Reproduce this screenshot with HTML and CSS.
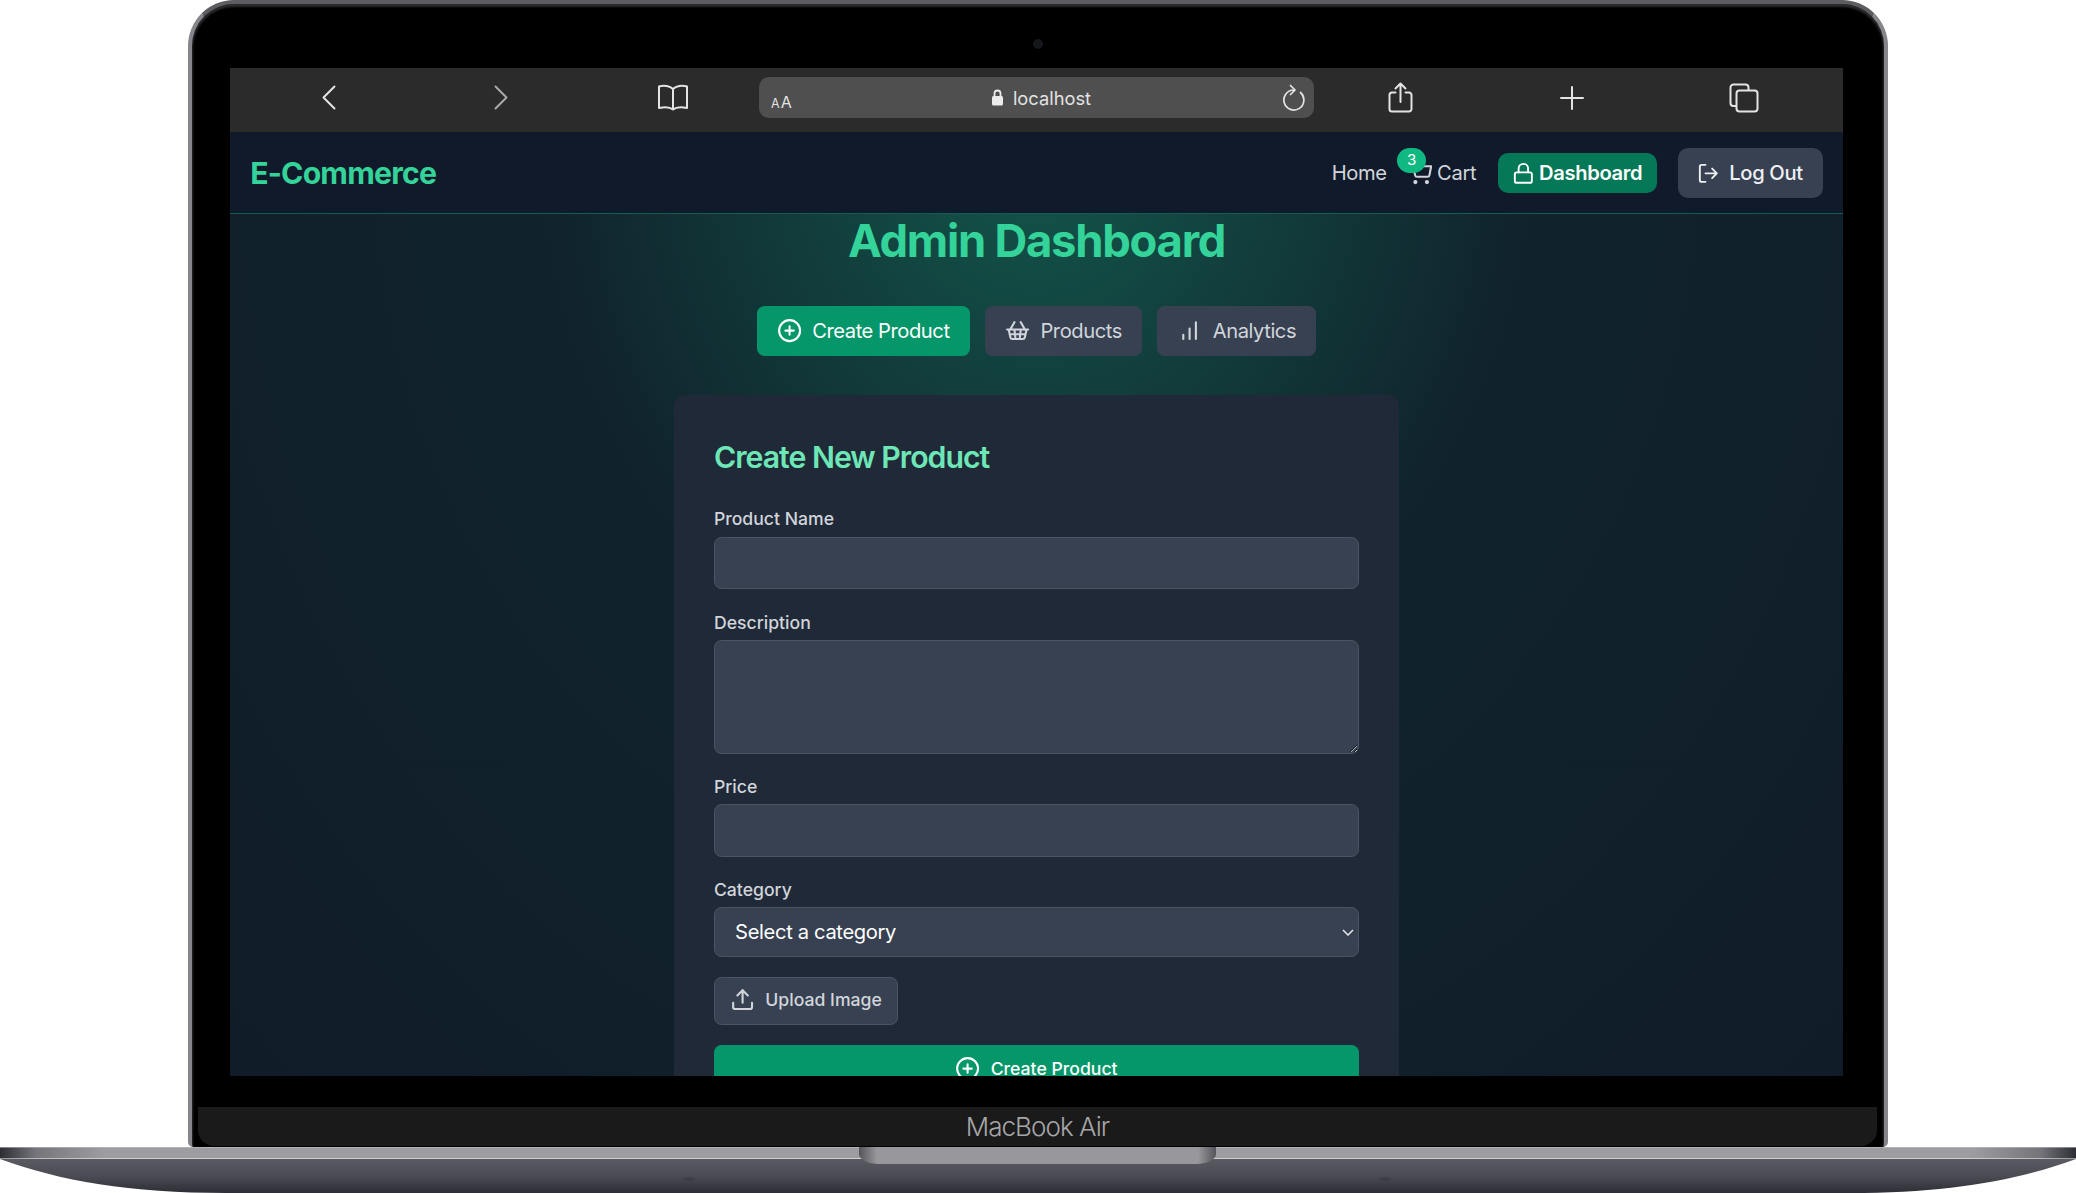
FILE: index.html
```html
<!DOCTYPE html>
<html lang="en">
<head>
<meta charset="utf-8">
<title>Admin Dashboard</title>
<link rel="stylesheet" href="styles.css">
</head>
<body>
<div class="device">
  <div class="lid">
    <div class="camera-row"><span class="camera"></span></div>
    <div class="screen">
      <div class="toolbar">
        <span class="cell"><svg class="tb-icon" width="14" height="25" viewBox="0 0 14 25"><path d="M12.5 1.5 1.5 12.5l11 11"/></svg></span>
        <span class="cell"><svg class="tb-icon dim" width="14" height="25" viewBox="0 0 14 25"><path d="m1.5 1.5 11 11-11 11"/></svg></span>
        <span class="cell"><svg class="tb-icon" width="32" height="27" viewBox="0 0 32 27"><path d="M16 5C13 2 7 1 2 2.5V24c5-1.200 11-1 14 1.500 3-2.500 9-2.700 14-1.500V2.500C25 1 19 2 16 5ZM16 5v20.500"/></svg></span>
        <div class="url-bar">
          <span class="aa"><small>A</small>A</span>
          <span class="url"><svg class="lock-glyph" width="13" height="17" viewBox="0 0 13 17"><path class="shackle" d="M3.500 8V4.500a3 3 0 0 1 6 0V8"/><rect x="1" y="7" width="11" height="9.500" rx="1.500"/></svg>localhost</span>
          <svg class="tb-icon reload" width="24" height="28" viewBox="0 0 24 28"><path d="M18.500 8.500A10 10 0 1 1 11.500 6M8.500 1.500l4.500 4.500-4.500 4.500"/></svg>
        </div>
        <span class="cell"><svg class="tb-icon" width="25" height="31" viewBox="0 0 25 31"><path d="M7.500 10.500H4a2.500 2.500 0 0 0-2.500 2.500v14A2.500 2.500 0 0 0 4 29.500h17a2.500 2.500 0 0 0 2.500-2.500V13a2.500 2.500 0 0 0-2.500-2.500h-3.500M12.500 20V1.500M7.500 6.500l5-5 5 5"/></svg></span>
        <span class="cell"><svg class="tb-icon" width="24" height="24" viewBox="0 0 24 24"><path d="M12 1v22M1 12h22"/></svg></span>
        <span class="cell"><svg class="tb-icon" width="30" height="30" viewBox="0 0 30 30"><path d="M7 23H4.500A3 3 0 0 1 1.500 20V4.500a3 3 0 0 1 3-3h12a3 3 0 0 1 3 3V7"/><rect x="7.500" y="7.500" width="21" height="21" rx="3"/></svg></span>
      </div>
      <div class="page">
        <nav class="nav">
          <a class="logo">E-Commerce</a>
          <div class="nav-links">
            <a class="nav-link">Home</a>
            <a class="nav-link cart">
              <span class="badge">3</span>
              <svg class="ico ico-cart" viewBox="0 0 24 24"><circle cx="8" cy="21" r="1"/><circle cx="19" cy="21" r="1"/><path d="M1 1h4l2.680 13.390a2 2 0 0 0 2 1.610h9.720a2 2 0 0 0 2-1.610L23 6H6"/></svg>
              Cart
            </a>
            <a class="nav-btn dash">
              <svg class="ico ico-sm gap-xs" viewBox="0 0 24 24"><rect x="3" y="11" width="18" height="11" rx="2"/><path d="M7 11V7a5 5 0 0 1 10 0v4"/></svg>
              Dashboard
            </a>
            <a class="nav-btn logout">
              <svg class="ico ico-sm gap-md" viewBox="0 0 24 24"><path d="M9 21H5a2 2 0 0 1-2-2V5a2 2 0 0 1 2-2h4M16 17l5-5-5-5M21 12H9"/></svg>
              Log Out
            </a>
          </div>
        </nav>
        <main class="main">
          <h1 class="title">Admin Dashboard</h1>
          <div class="tabs">
            <button class="tab active">
              <svg class="ico gap-md" viewBox="0 0 24 24"><circle cx="12" cy="12" r="10"/><path d="M12 8v8M8 12h8"/></svg>
              Create Product
            </button>
            <button class="tab">
              <svg class="ico gap-md" viewBox="0 0 24 24"><path d="m15 11-1 9M19 11l-4-7M2 11h20M3.500 11l1.600 7.400a2 2 0 0 0 2 1.600h9.800a2 2 0 0 0 2-1.600l1.700-7.400M4.500 15.500h15M5 11l4-7M9 11l1 9"/></svg>
              Products
            </button>
            <button class="tab">
              <svg class="ico gap-md" viewBox="0 0 24 24"><path d="M12 20V10M18 20V4M6 20v-4"/></svg>
              Analytics
            </button>
          </div>
          <section class="card">
            <h2 class="card-title">Create New Product</h2>
            <form class="form">
              <div class="field">
                <label class="label" for="name">Product Name</label>
                <input class="control" id="name" type="text">
              </div>
              <div class="field">
                <label class="label" for="desc">Description</label>
                <textarea class="control area" id="desc" rows="3"></textarea>
              </div>
              <div class="field">
                <label class="label" for="price">Price</label>
                <input class="control" id="price" type="text">
              </div>
              <div class="field">
                <label class="label" for="cat">Category</label>
                <div class="select-wrap">
                  <select class="control select" id="cat"><option>Select a category</option></select>
                  <svg class="chevron" width="12" height="7" viewBox="0 0 12 7"><path d="m1 1 5 5 5-5"/></svg>
                </div>
              </div>
              <div class="upload-row">
                <button class="upload" type="button">
                  <svg class="ico gap-md" viewBox="0 0 24 24"><path d="M21 15v4a2 2 0 0 1-2 2H5a2 2 0 0 1-2-2v-4M17 8l-5-5-5 5M12 3v12"/></svg>
                  Upload Image
                </button>
              </div>
              <button class="submit" type="button">
                <svg class="ico gap-md" viewBox="0 0 24 24"><circle cx="12" cy="12" r="10"/><path d="M12 8v8M8 12h8"/></svg>
                Create Product
              </button>
            </form>
          </section>
        </main>
      </div>
    </div>
    <div class="chin">MacBook Air</div>
  </div>
  <svg class="base" width="2076" height="46" viewBox="0 0 2076 46">
    <defs>
      <linearGradient id="strip" x1="0" x2="1" y1="0" y2="0">
        <stop offset="0" stop-color="#2c2d35"/>
        <stop offset=".017" stop-color="#74747a"/>
        <stop offset=".05" stop-color="#9d9da1"/>
        <stop offset=".95" stop-color="#9d9da1"/>
        <stop offset=".983" stop-color="#74747a"/>
        <stop offset="1" stop-color="#2c2d35"/>
      </linearGradient>
      <linearGradient id="under" x1="0" x2="0" y1="0" y2="1">
        <stop offset="0" stop-color="#5a5a62"/>
        <stop offset=".5" stop-color="#4b4b54"/>
        <stop offset="1" stop-color="#2c2d35"/>
      </linearGradient>
      <linearGradient id="notch" x1="0" x2="1" y1="0" y2="0">
        <stop offset="0" stop-color="#54545a"/>
        <stop offset=".05" stop-color="#97979c"/>
        <stop offset=".95" stop-color="#97979c"/>
        <stop offset="1" stop-color="#54545a"/>
      </linearGradient>
    </defs>
    <path fill="url(#under)" d="M0 12C60 34 130 46 226 46H1850C1946 46 2016 34 2076 12Z"/>
    <rect fill="url(#strip)" width="2076" height="11.500"/>
    <rect fill="#c4c4c7" width="2076" height="1" x="0" y="0" opacity=".55"/>
    <path fill="url(#notch)" d="M859 0H1216V7C1216 13 1206 17 1196 17H879C869 17 859 13 859 7Z"/>
    <ellipse cx="689" cy="32" rx="6" ry="2" fill="#33343b" opacity=".45"/>
    <ellipse cx="1385" cy="32" rx="6" ry="2" fill="#33343b" opacity=".45"/>
  </svg>
</div>
</body>
</html>
```
FILE: styles.css
```css
* { box-sizing: border-box; }
html { font-size: 20.16px; }
body {
  margin: 0;
  background: #fff;
  font-family: Inter, "Liberation Sans", sans-serif;
  overflow: hidden;
}
svg { display: block; flex: none; }

.device { width: 2076px; height: 1193px; overflow: hidden; }

.lid {
  height: 1147px;
  margin: 0 188px;
  padding: 0 41px 0 38px;
  background: #000;
  border: 4px solid #85858a;
  border-top-color: #5c5c61;
  border-bottom: 0;
  border-radius: 46px 46px 5px 5px;
  box-shadow: inset 0 2px 2px 1px #2a2a2d;
}
.camera-row { height: 64px; display: flex; justify-content: center; padding-top: 35px; padding-left: 2px; }
.camera { width: 10px; height: 10px; border-radius: 50%; background: #16171b; }

.screen { height: 1008px; overflow: hidden; }

/* Safari toolbar */
.toolbar {
  height: 64px;
  padding: 9px 13px 0;
  display: grid;
  grid-template-columns: 172px 172px 172px 1fr 172px 172px 172px;
  align-items: start;
  background: #2b2b2b;
}
.cell { height: 41px; display: flex; align-items: center; justify-content: center; }
.tb-icon { fill: none; stroke: #e4e4e4; stroke-width: 2; stroke-linecap: round; stroke-linejoin: round; }
.tb-icon.dim { stroke: #a9a9a9; }
.url-bar {
  height: 41px;
  padding: 0 8px 0 12px;
  display: flex;
  align-items: center;
  justify-content: space-between;
  background: #4f4f4f;
  border-radius: 10px;
  color: #e2e2e2;
}
.aa { width: 30px; padding-top: 9px; font-size: 16px; line-height: 1; letter-spacing: 1px; }
.aa small { font-size: 12.500px; }
.url { display: flex; align-items: center; gap: 9px; margin-left: -1px; font-size: 18.300px; }
.lock-glyph { fill: #ececec; }
.lock-glyph .shackle { fill: none; stroke: #ececec; stroke-width: 1.800; }
.reload { stroke-width: 1.700; }

/* App */
.page {
  height: 944px;
  overflow: hidden;
  background-color: #111827;
  background-image: radial-gradient(ellipse at top, rgba(22,190,135,.38) 0%, rgba(14,90,72,.18) 42%, rgba(10,70,50,.08) 100%);
}
.nav {
  height: 82px;
  padding: 1px 1rem 0;
  display: flex;
  align-items: center;
  justify-content: space-between;
  background: #111a2b;
  border-bottom: 1px solid #0f5f58;
}
.logo { font-size: 1.5rem; line-height: 2rem; font-weight: 700; color: #34d399; letter-spacing: -.8px; }
.nav-links { display: flex; align-items: center; gap: 1rem; letter-spacing: -.35px; }
.nav-link { display: flex; align-items: center; position: relative; line-height: 1.5rem; color: #d1d5db; font-size: 1rem; }
.badge {
  position: absolute;
  top: -.5rem;
  left: -.5rem;
  padding: .125rem .5rem;
  border-radius: 999px;
  background: #10b981;
  color: #fff;
  font-size: .75rem;
  line-height: 1rem;
}
.cart { margin-right: 2px; }
.ico {
  width: 1.25rem;
  height: 1.25rem;
  fill: none;
  stroke: currentColor;
  stroke-width: 2;
  stroke-linecap: round;
  stroke-linejoin: round;
}
.ico-sm { width: 22.700px; height: 22.700px; }
.ico-cart { margin-right: .25rem; }
.gap-xs { margin-right: 4px; }
.gap-md { margin-right: .5rem; }
.nav-btn { display: flex; align-items: center; border-radius: .5rem; font-size: 1rem; line-height: 1.5rem; font-weight: 500; }
.dash { padding: .25rem .75rem .25rem 14px; background: #047857; color: #fff; font-weight: 600; }
.logout { padding: .5rem 1rem .5rem 19px; background: #374151; color: #eef0f3; font-weight: 500; }

.main { padding-bottom: 40px; }
.title {
  margin: 0 0 calc(2rem - 1px);
  padding-top: 2px;
  text-align: center;
  font-size: 2.25rem;
  line-height: 2.5rem;
  font-weight: 700;
  color: #34d399;
  letter-spacing: -1.25px;
}
.tabs { display: flex; justify-content: center; gap: .76rem; margin-bottom: calc(2rem - 1px); }
.tab {
  display: flex;
  align-items: center;
  padding: .5rem 1rem;
  border: 0;
  border-radius: .375rem;
  background: #374151;
  color: #d1d5db;
  font: 400 1rem/1.5rem Inter, sans-serif;
  letter-spacing: -.45px;
}
.tab.active { background: #059669; color: #fff; }

.card {
  width: 36rem;
  margin: 0 auto;
  padding: 2rem;
  background: #1f2937;
  border-radius: .5rem;
}
.card-title {
  margin: 0 0 calc(1.5rem - 1px);
  padding-top: 1px;
  font-size: 1.5rem;
  line-height: 2rem;
  font-weight: 600;
  color: #6ee7b7;
  letter-spacing: -1px;
}
.form { display: flex; flex-direction: column; gap: 1rem; }
.label { display: block; font-size: .875rem; line-height: 1.25rem; font-weight: 500; color: #d1d5db; }
.control {
  display: block;
  width: 100%;
  margin-top: .25rem;
  height: 2.625rem;
  padding: 0 1rem;
  background: #374151;
  border: 1.260px solid #4b5563;
  border-radius: .375rem;
  color: #fff;
  font: 400 1rem/1.5rem Inter, sans-serif;
  letter-spacing: -.35px;
}
.area { height: 114px; resize: vertical; }
.select-wrap { position: relative; }
.select { height: 49.500px; margin-top: 4.600px; appearance: none; -webkit-appearance: none; }
.chevron { position: absolute; right: 5px; top: 22px; fill: none; stroke: #e5e7eb; stroke-width: 1.500; }
.upload-row { display: flex; }
.upload {
  display: flex;
  align-items: center;
  height: 48px;
  padding: 0 .75rem 2px;
  background: #374151;
  border: 1.260px solid #4b5563;
  border-radius: .375rem;
  color: #d1d5db;
  font: 500 .875rem/1.25rem Inter, sans-serif;
}
.submit {
  display: flex;
  align-items: center;
  justify-content: center;
  width: 100%;
  height: 48px;
  border: 0;
  border-radius: .375rem;
  background: #059669;
  color: #fff;
  font: 500 .875rem/1.25rem Inter, sans-serif;
}

.chin {
  height: 39px;
  margin: 31px -34px 0 -32px;
  display: flex;
  align-items: center;
  justify-content: center;
  background: #1a1a1a;
  border-radius: 0 0 16px 16px;
  color: #a6a6a8;
  font-size: 26px;
  font-weight: 300;
  letter-spacing: -.95px;
}
.base { display: block; }
```
